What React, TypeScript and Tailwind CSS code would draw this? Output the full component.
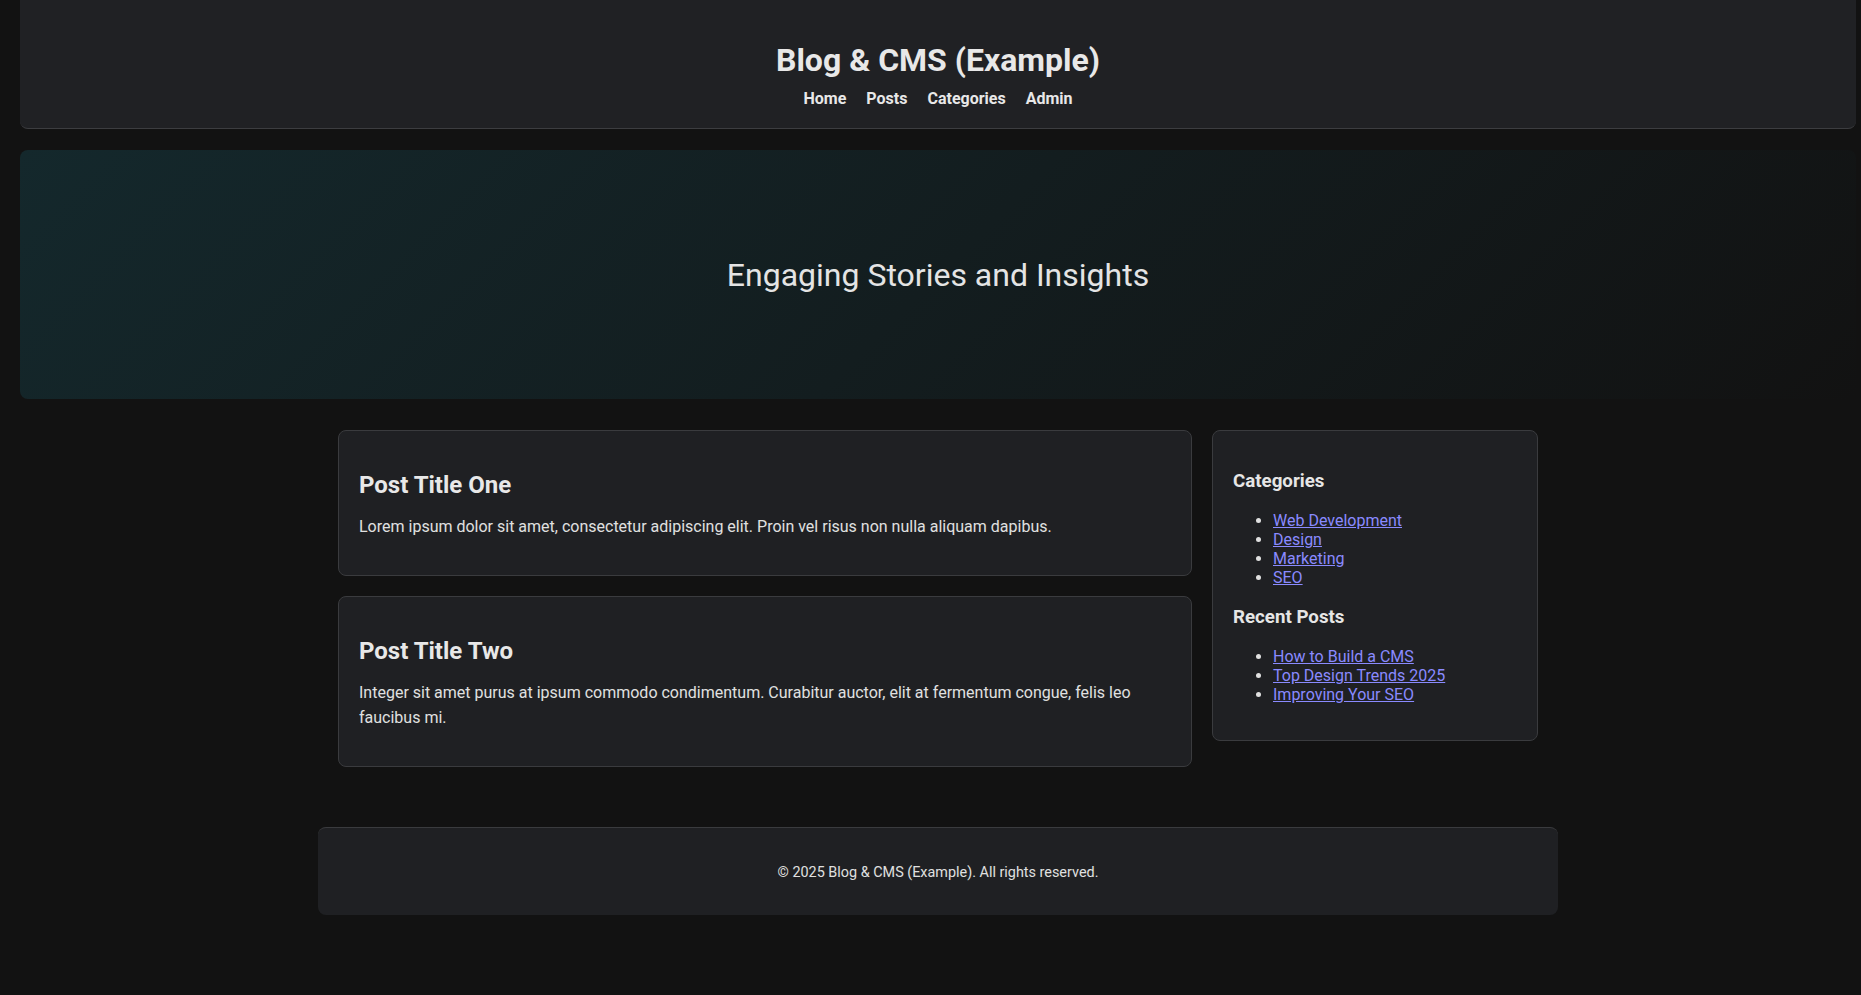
const categories = ["Web Development", "Design", "Marketing", "SEO"];
const recentPosts = ["How to Build a CMS", "Top Design Trends 2025", "Improving Your SEO"];

const posts = [
  {
    title: "Post Title One",
    body: "Lorem ipsum dolor sit amet, consectetur adipiscing elit. Proin vel risus non nulla aliquam dapibus.",
  },
  {
    title: "Post Title Two",
    body: "Integer sit amet purus at ipsum commodo condimentum. Curabitur auctor, elit at fermentum congue, felis leo faucibus mi.",
  },
];

function SideList({ title, items }: { title: string; items: string[] }) {
  return (
    <>
      <h3 className="mb-[19px] mt-[19px] text-[18.72px] font-bold leading-[22px] text-[#e6e6e6]">{title}</h3>
      <ul className="mb-[19px] list-disc pl-[40px] text-[16px] leading-[19px]">
        {items.map((item) => (
          <li key={item}>
            <a href="#" className="text-[#8a8aff] underline">
              {item}
            </a>
          </li>
        ))}
      </ul>
    </>
  );
}

export default function App() {
  return (
    <div className="min-h-[995px] bg-[#121212] font-['Roboto','Liberation_Sans',sans-serif] text-[#e0e0e0]">
      <div className="ml-[20px] mr-[5px]">
        <header className="rounded-b-lg border-b border-[#3c3d40] bg-[#202124] pb-[19px] pt-[41px] text-center">
          <h1 className="text-[32px] font-bold leading-[38px] text-[#e8e8e8]">Blog &amp; CMS (Example)</h1>
          <nav className="mt-[10px] flex justify-center gap-[20px] text-[16px] font-bold leading-[20px] text-[#e8e8e8]">
            <a href="#">Home</a>
            <a href="#">Posts</a>
            <a href="#">Categories</a>
            <a href="#">Admin</a>
          </nav>
        </header>

        <section className="mt-[21px] flex h-[249px] items-center justify-center rounded-lg bg-linear-[135deg] from-[#14282c] to-[#121212]">
          <h2 className="text-[32px] font-normal leading-[38px] text-[#e4e4e4]">Engaging Stories and Insights</h2>
        </section>

        <main className="mx-auto mt-[31px] grid w-[1200px] grid-cols-[854px_326px] items-start gap-[20px]">
          <div className="flex flex-col gap-[20px]">
            {posts.map((p) => (
              <article key={p.title} className="rounded-lg border border-[#3a3b3e] bg-[#1f2023] px-[20px] pb-[20px] pt-[20px]">
                <h2 className="mb-[15px] mt-[20px] text-[24px] font-bold leading-[28px] text-[#e8e8e8]">{p.title}</h2>
                <p className="mb-[16px] text-[16px] leading-[25px]">{p.body}</p>
              </article>
            ))}
          </div>
          <aside className="rounded-lg border border-[#3a3b3e] bg-[#1f2023] px-[20px] pb-[17px] pt-[20px]">
            <SideList title="Categories" items={categories} />
            <SideList title="Recent Posts" items={recentPosts} />
          </aside>
        </main>

        <footer className="mx-auto mt-[60px] flex h-[88px] w-[1240px] items-center justify-center rounded-lg border-t border-[#3a3b3e] bg-[#1f2023] pt-[2px] text-[14.4px] text-[#e0e0e0]">
          <p>© 2025 Blog &amp; CMS (Example). All rights reserved.</p>
        </footer>
      </div>
    </div>
  );
}
